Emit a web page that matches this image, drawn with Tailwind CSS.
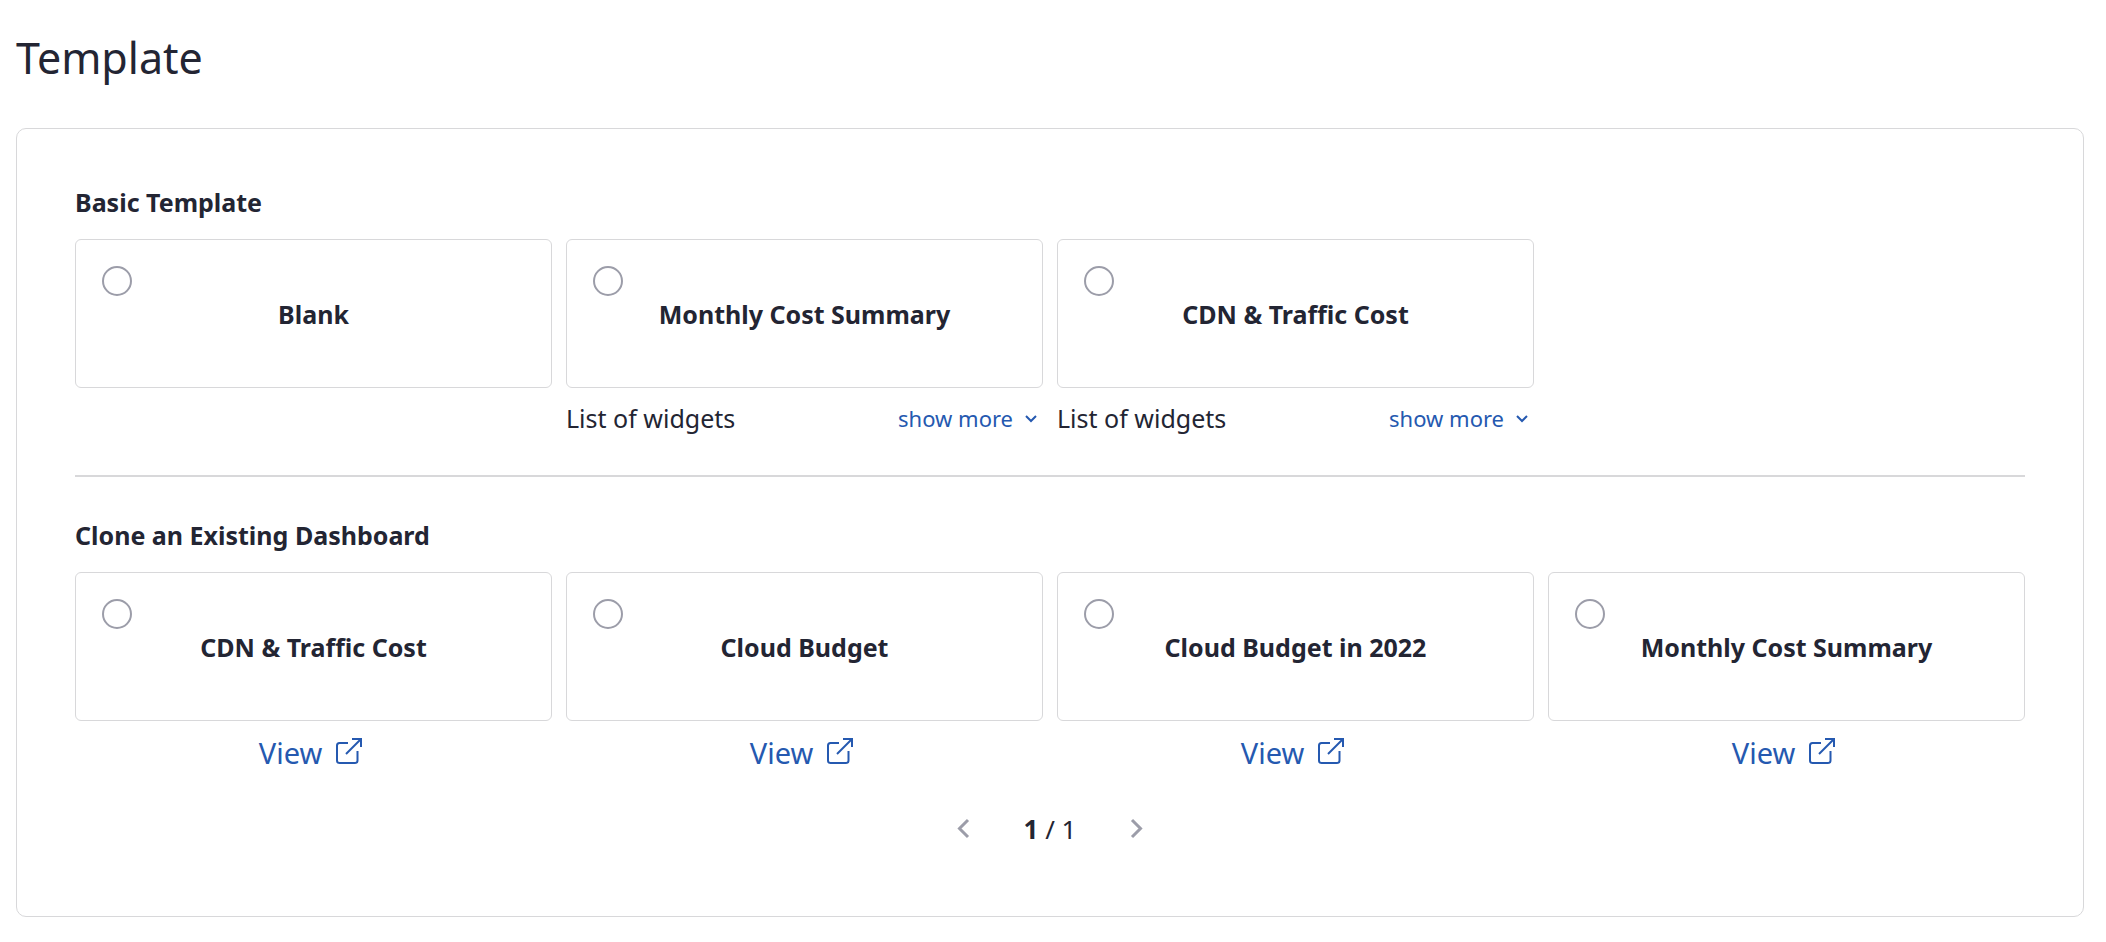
<!DOCTYPE html>
<html lang="en">
<head>
  <meta charset="UTF-8" />
  <meta name="viewport" content="width=device-width, initial-scale=1.0" />
  <title>Template</title>
  <script src="https://cdn.jsdelivr.net/npm/@tailwindcss/browser@4"></script>
</head>
<body class="bg-white text-[#232533] font-['Noto_Sans',sans-serif] pl-4 pr-[22px] pt-7 pb-6">

  <!-- Shared icons -->
  <svg class="hidden" aria-hidden="true">
    <symbol id="icon-external" viewBox="0 0 36 36" fill="none" stroke="currentColor" stroke-width="2">
      <path d="M16 8H7.500Q5 8 5 10.500V25.500Q5 28 7.500 28H23Q25.500 28 25.500 25.500V16" />
      <path d="M14 19L29 4" />
      <path d="M20 4H29V12" />
    </symbol>
    <symbol id="icon-down" viewBox="0 0 24 24" fill="none" stroke="currentColor" stroke-width="2">
      <path d="M7 10L12 15L17 10" />
    </symbol>
    <symbol id="icon-left" viewBox="0 0 24 24" fill="none" stroke="currentColor" stroke-width="3">
      <path d="M16 3L7.500 11.500L16 20" />
    </symbol>
    <symbol id="icon-right" viewBox="0 0 24 24" fill="none" stroke="currentColor" stroke-width="3">
      <path d="M8 3L16.500 11.500L8 20" />
    </symbol>
  </svg>

  <h1 class="text-[43px] leading-[60px] mb-10">Template</h1>

  <main class="border border-[#d8d8da] rounded-[10px] px-[58px] pt-[55px] pb-[69px]">

    <!-- Basic templates -->
    <section>
      <h2 class="text-[25px] leading-9 font-bold mb-[19px]">Basic Template</h2>
      <div class="grid grid-cols-4 gap-[14px]">
        <div>
          <label class="relative flex items-center justify-center h-[149px] border border-[#d8d8da] rounded-md text-[25px] leading-9 font-bold cursor-pointer">
            <input type="radio" name="template" class="absolute left-[26px] top-[26px] size-[30px] appearance-none rounded-full border-2 border-[#9c9da9] checked:border-8 checked:border-[#2559b0]" />
            Blank
          </label>
        </div>
        <div>
          <label class="relative flex items-center justify-center h-[149px] border border-[#d8d8da] rounded-md text-[25px] leading-9 font-bold cursor-pointer">
            <input type="radio" name="template" class="absolute left-[26px] top-[26px] size-[30px] appearance-none rounded-full border-2 border-[#9c9da9] checked:border-8 checked:border-[#2559b0]" />
            Monthly Cost Summary
          </label>
          <div class="flex items-center justify-between mt-3 text-[25px] leading-9">
            <span>List of widgets</span>
            <button type="button" class="flex items-center gap-[6px] text-[22px] leading-8 text-[#2559b0] cursor-pointer">
              show more
              <svg class="size-6"><use href="#icon-down" /></svg>
            </button>
          </div>
        </div>
        <div>
          <label class="relative flex items-center justify-center h-[149px] border border-[#d8d8da] rounded-md text-[25px] leading-9 font-bold cursor-pointer">
            <input type="radio" name="template" class="absolute left-[26px] top-[26px] size-[30px] appearance-none rounded-full border-2 border-[#9c9da9] checked:border-8 checked:border-[#2559b0]" />
            CDN &amp; Traffic Cost
          </label>
          <div class="flex items-center justify-between mt-3 text-[25px] leading-9">
            <span>List of widgets</span>
            <button type="button" class="flex items-center gap-[6px] text-[22px] leading-8 text-[#2559b0] cursor-pointer">
              show more
              <svg class="size-6"><use href="#icon-down" /></svg>
            </button>
          </div>
        </div>
      </div>
    </section>

    <hr class="mt-[39px] mb-10 border-t-2 border-[#d8d8da]" />

    <!-- Existing dashboards -->
    <section>
      <h2 class="text-[25px] leading-9 font-bold mb-[19px]">Clone an Existing Dashboard</h2>
      <div class="grid grid-cols-4 gap-[14px]">
        <div>
          <label class="relative flex items-center justify-center h-[149px] border border-[#d8d8da] rounded-md text-[25px] leading-9 font-bold cursor-pointer">
            <input type="radio" name="template" class="absolute left-[26px] top-[26px] size-[30px] appearance-none rounded-full border-2 border-[#9c9da9] checked:border-8 checked:border-[#2559b0]" />
            CDN &amp; Traffic Cost
          </label>
          <a href="#" class="flex items-center justify-center gap-[10px] mt-3 text-[29px] leading-10 text-[#2559b0]">
            View
            <svg class="size-9"><use href="#icon-external" /></svg>
          </a>
        </div>
        <div>
          <label class="relative flex items-center justify-center h-[149px] border border-[#d8d8da] rounded-md text-[25px] leading-9 font-bold cursor-pointer">
            <input type="radio" name="template" class="absolute left-[26px] top-[26px] size-[30px] appearance-none rounded-full border-2 border-[#9c9da9] checked:border-8 checked:border-[#2559b0]" />
            Cloud Budget
          </label>
          <a href="#" class="flex items-center justify-center gap-[10px] mt-3 text-[29px] leading-10 text-[#2559b0]">
            View
            <svg class="size-9"><use href="#icon-external" /></svg>
          </a>
        </div>
        <div>
          <label class="relative flex items-center justify-center h-[149px] border border-[#d8d8da] rounded-md text-[25px] leading-9 font-bold cursor-pointer">
            <input type="radio" name="template" class="absolute left-[26px] top-[26px] size-[30px] appearance-none rounded-full border-2 border-[#9c9da9] checked:border-8 checked:border-[#2559b0]" />
            Cloud Budget in 2022
          </label>
          <a href="#" class="flex items-center justify-center gap-[10px] mt-3 text-[29px] leading-10 text-[#2559b0]">
            View
            <svg class="size-9"><use href="#icon-external" /></svg>
          </a>
        </div>
        <div>
          <label class="relative flex items-center justify-center h-[149px] border border-[#d8d8da] rounded-md text-[25px] leading-9 font-bold cursor-pointer">
            <input type="radio" name="template" class="absolute left-[26px] top-[26px] size-[30px] appearance-none rounded-full border-2 border-[#9c9da9] checked:border-8 checked:border-[#2559b0]" />
            Monthly Cost Summary
          </label>
          <a href="#" class="flex items-center justify-center gap-[10px] mt-3 text-[29px] leading-10 text-[#2559b0]">
            View
            <svg class="size-9"><use href="#icon-external" /></svg>
          </a>
        </div>
      </div>
    </section>

    <!-- Pagination -->
    <nav class="flex items-center justify-center gap-12 mt-[38px] text-[26px] leading-9" aria-label="Pagination">
      <button type="button" aria-label="Previous page" class="text-[#9c9da9] cursor-pointer">
        <svg class="size-6"><use href="#icon-left" /></svg>
      </button>
      <span><b>1</b> / 1</span>
      <button type="button" aria-label="Next page" class="text-[#9c9da9] cursor-pointer">
        <svg class="size-6"><use href="#icon-right" /></svg>
      </button>
    </nav>
  </main>
</body>
</html>
